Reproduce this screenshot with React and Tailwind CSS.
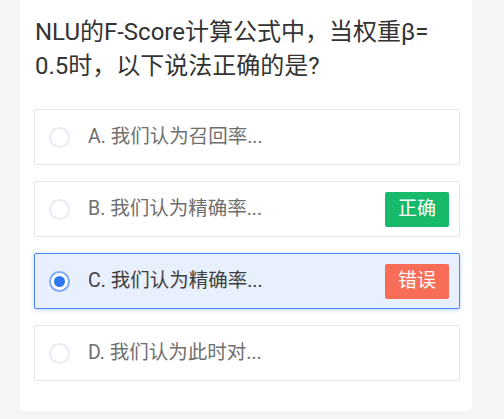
import React from "react";

const font = { fontFamily: 'Roboto, "Noto Sans CJK SC", sans-serif' };

function Radio({ checked }) {
  if (checked) {
    return (
      <div className="w-[21px] h-[21px] shrink-0 rounded-full border-2 border-[#7eabf7] bg-white flex items-center justify-center">
        <div className="w-[11px] h-[11px] rounded-full bg-[#2f76f3]" />
      </div>
    );
  }
  return <div className="w-[21px] h-[21px] shrink-0 rounded-full border-2 border-[#e8ecf2] bg-white" />;
}

function Option({ label, checked, badge }) {
  return (
    <div
      className={
        "h-[56px] flex items-center pl-[14px] pr-[10px] rounded-[2px] border " +
        (checked
          ? "bg-[#e8effd] border-[#4a88f4] shadow-[0_1px_4px_rgba(59,130,246,0.35)]"
          : "bg-white border-[#e2e6ed]")
      }
    >
      <Radio checked={checked} />
      <span
        className={
          "ml-[18px] text-[19.5px] leading-none flex-1 " +
          (checked ? "text-[#3f3f3f]" : "text-[#6f6f6f]")
        }
      >
        {label}
      </span>
      {badge === "ok" && (
        <span className="w-[64px] h-[35px] rounded-[2px] bg-[#17b96b] text-white text-[19px] flex items-center justify-center">
          正确
        </span>
      )}
      {badge === "bad" && (
        <span className="w-[64px] h-[35px] rounded-[2px] bg-[#f76d57] text-white text-[19px] flex items-center justify-center">
          错误
        </span>
      )}
    </div>
  );
}

export default function App() {
  return (
    <div className="w-[504px] h-[419px] bg-[#f4f5f7] overflow-hidden" style={font}>
      <div className="ml-[20px] w-[452px] h-[411px] bg-white rounded-b-[5px] pt-[15px] pl-[14px] pr-[12px]">
        <div className="pl-[1px] text-[24px] leading-[34px] text-[#333333]">
          NLU的F-Score计算公式中，当权重β=
          <br />
          0.5时，以下说法正确的是?
        </div>
        <div className="mt-[26px] flex flex-col gap-4">
          <Option label="A. 我们认为召回率..." />
          <Option label="B. 我们认为精确率..." badge="ok" />
          <Option label="C. 我们认为精确率..." checked badge="bad" />
          <Option label="D. 我们认为此时对..." />
        </div>
      </div>
    </div>
  );
}
